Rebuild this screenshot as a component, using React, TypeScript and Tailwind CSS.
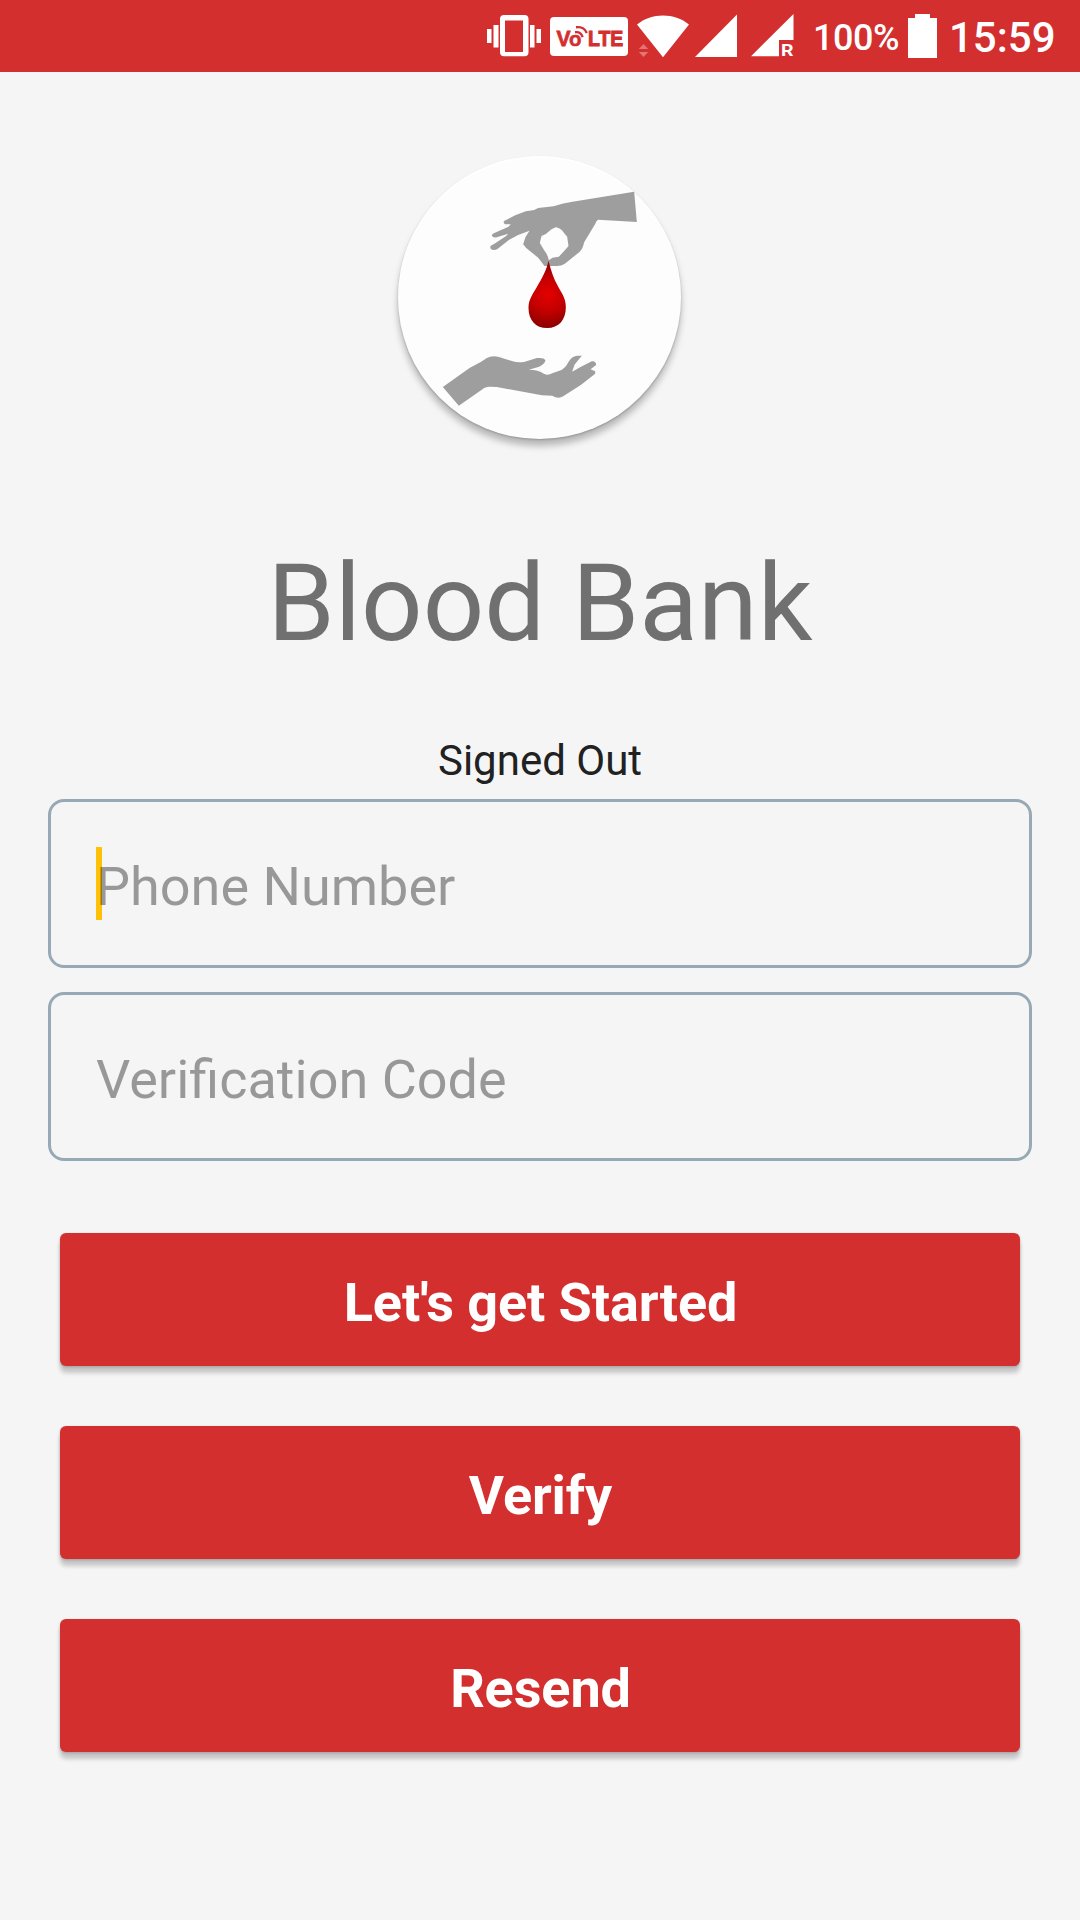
import React from 'react';

function VibrateIcon() {
  return (
    <svg className="mt-[15px] h-[42px] w-[54px]" viewBox="0 0 54 42" fill="#fff">
      <rect x="0" y="14" width="4.5" height="14" />
      <rect x="6.5" y="10" width="5" height="22.5" />
      <rect x="43" y="10" width="4.5" height="22.5" />
      <rect x="49.5" y="14" width="4.5" height="14" />
      <path
        fillRule="evenodd"
        d="M17 0h20.500a4 4 0 0 1 4 4v33.300a4 4 0 0 1-4 4H17a4 4 0 0 1-4-4V4a4 4 0 0 1 4-4ZM18 5.500V37h18V5.500Z"
      />
    </svg>
  );
}

function VolteBadge() {
  return (
    <svg
      className="mt-[17px] ml-[9px] h-[39px] w-[78px]"
      viewBox="0 0 78 39"
      fontFamily="'Liberation Sans', sans-serif"
      fontWeight="700"
      fill="#d32f2f"
      stroke="#d32f2f"
    >
      <rect width="78" height="39" rx="4" fill="#fff" stroke="none" />
      <text x="6.500" y="28.500" fontSize="22" strokeWidth="0.8" textLength="14" lengthAdjust="spacingAndGlyphs">V</text>
      <text x="19" y="29.200" fontSize="20" strokeWidth="0.5" textLength="12.500" lengthAdjust="spacingAndGlyphs">o</text>
      <text x="38" y="28.500" fontSize="22" strokeWidth="1" textLength="35.300" lengthAdjust="spacingAndGlyphs">LTE</text>
      <g fill="none" strokeWidth="2.400">
        <path d="M26 10.200c5.200-.6 9.400 1.800 10.800 5.800" />
        <path d="M25 15.200c3.400-.5 6.500 1.300 7.600 4.900" />
      </g>
    </svg>
  );
}

function WifiIcon() {
  return (
    <svg className="mt-[15px] ml-[9px] h-[43px] w-[52px]" viewBox="0 0 52 43" fill="#fff">
      <path d="M0 9.500C7.500 3.500 16.500.5 26 .5s18.500 3 26 9L26 42.200Z" />
      <path d="M6.500 29l4.700 5H1.800ZM6.500 42l4.700-5H1.800Z" fill="#e57373" />
    </svg>
  );
}

function SignalIcon() {
  return (
    <svg className="mt-[14px] ml-[6px] h-[43px] w-[42px]" viewBox="0 0 42 43" fill="#fff">
      <path d="M42 .5V43H0Z" />
    </svg>
  );
}

function RoamingSignalIcon() {
  return (
    <svg className="mt-[14px] ml-[14px] h-[50px] w-[46px]" viewBox="0 0 46 50" fill="#fff">
      <path d="M42.500 0V26H28V42.300H0Z" />
      <text x="30" y="42" fontSize="17" fontWeight="700" fontFamily="Roboto, sans-serif" textLength="12.500" lengthAdjust="spacingAndGlyphs">R</text>
    </svg>
  );
}

function BatteryIcon() {
  return (
    <svg className="mt-[14px] h-[44px] w-[29px]" viewBox="0 0 29 44" fill="#fff">
      <path d="M7 0h15v4h7v40H0V4h7Z" />
    </svg>
  );
}

function StatusBar() {
  return (
    <header className="flex h-[72px] items-start bg-[#d32f2f] pl-[487px] text-white">
      <VibrateIcon />
      <VolteBadge />
      <WifiIcon />
      <SignalIcon />
      <RoamingSignalIcon />
      <span className="mt-[17px] ml-[16px] w-[95px] text-[36px] leading-[42px] font-medium tracking-[-0.5px] whitespace-nowrap">100%</span>
      <BatteryIcon />
      <span className="mt-[13px] ml-[12px] text-[42px] leading-[50px] font-medium whitespace-nowrap">15:59</span>
    </header>
  );
}

function Logo() {
  return (
    <div className="mt-[84px] mr-[2px] h-[283px] w-[283px] self-center rounded-full bg-[#fdfdfd] shadow-[0_7px_7px_rgba(0,0,0,0.26),0_1px_2px_rgba(0,0,0,0.2),inset_0_2px_2px_#fff]">
      <svg className="h-full w-full" viewBox="53.500 47 849 849">
        <defs>
          <radialGradient id="blood" gradientUnits="userSpaceOnUse" cx="503" cy="462" r="100">
            <stop offset="0" stopColor="#e40000" />
            <stop offset="0.5" stopColor="#c40000" />
            <stop offset="1" stopColor="#8c0000" />
          </radialGradient>
        </defs>
        <path
          fill="#9e9e9e"
          fillRule="evenodd"
          d="M762 154L770 245L654 238Q648 240 645 251L612 306Q608 326 598 335L554 370Q544 377 530 377L493 377L474 352L438 323L429 312L436 290L448 271L414 284L386 299L352 326Q342 332 333 327Q328 321 332 316L345 309L378 287L384 280L350 291Q338 293 335 286Q335 281 341 279L385 259L392 252L375 252Q367 247 373 241L405 225L437 213L462 209L474 203L520 198Q550 188 577 184ZM527 261L514 267L497 281L484 287L479 308L492 330Q504 345 506 360L517 352L536 349L550 334L565 317L561 289L551 277Q540 262 527 261Z"
        />
        <path
          fill="url(#blood)"
          d="M505 361C512 388 520 414 533 437C545 459 557 474 557 500C557 539 536 563 501 563C466 563 445 539 445 502C445 477 459 460 470 440C485 414 499 390 505 361Z"
        />
        <path
          fill="#9e9e9e"
          d="M188 740L236 796L307 747Q314 739 328 739L350 740L485 765L516 766Q534 777 549 768L603 733L645 700V693L631 687L648 674Q647 661 635 663L601 680L576 694L583 673L597 656L605 646L590 646Q573 649 565 665Q556 682 544 689L516 699Q503 707 491 700Q475 688 446 688L477 679Q494 671 496 660Q492 651 470 653L434 664Q415 668 395 662L354 649Q334 645 320 653L303 664L268 683Z"
        />
      </svg>
    </div>
  );
}

type FieldProps = { placeholder: string; focused?: boolean };

function Field({ placeholder, focused = false }: FieldProps) {
  return (
    <div className="relative h-[169px] rounded-[16px] border-[3px] border-[#97a9b4] pt-[53px] pl-[45px]">
      {focused && <span className="absolute top-[45px] left-[45px] h-[73px] w-[6px] bg-[#ffc107]" />}
      <span className="relative block text-[54px] leading-[63px] text-black/38">{placeholder}</span>
    </div>
  );
}

function ActionButton({ children }: { children: React.ReactNode }) {
  return (
    <button className="block h-[133px] w-full rounded-[6px] bg-[#d32f2f] pt-[5px] pl-[1px] text-center text-[54px] leading-[63px] font-bold tracking-[-0.1px] text-white shadow-[0_7px_4px_rgba(0,0,0,0.19),0_1px_3px_rgba(0,0,0,0.2)]">
      {children}
    </button>
  );
}

export default function App() {
  return (
    <div className="flex h-[1920px] w-[1080px] flex-col overflow-hidden bg-[#f5f5f5] font-[Roboto,sans-serif]">
      <StatusBar />
      <main className="flex flex-col">
        <Logo />
        <h1 className="mt-[101px] text-center text-[108px] leading-[126px] text-[#707070]">Blood Bank</h1>
        <p className="mt-[70px] text-center text-[42px] leading-[50px] text-[#212121]">Signed Out</p>
        <form className="mt-[13px] flex flex-col px-12">
          <div className="flex flex-col gap-6">
            <Field placeholder="Phone Number" focused />
            <Field placeholder="Verification Code" />
          </div>
          <div className="mt-[72px] flex flex-col gap-[60px] px-3">
            <ActionButton>Let's get Started</ActionButton>
            <ActionButton>Verify</ActionButton>
            <ActionButton>Resend</ActionButton>
          </div>
        </form>
      </main>
    </div>
  );
}
